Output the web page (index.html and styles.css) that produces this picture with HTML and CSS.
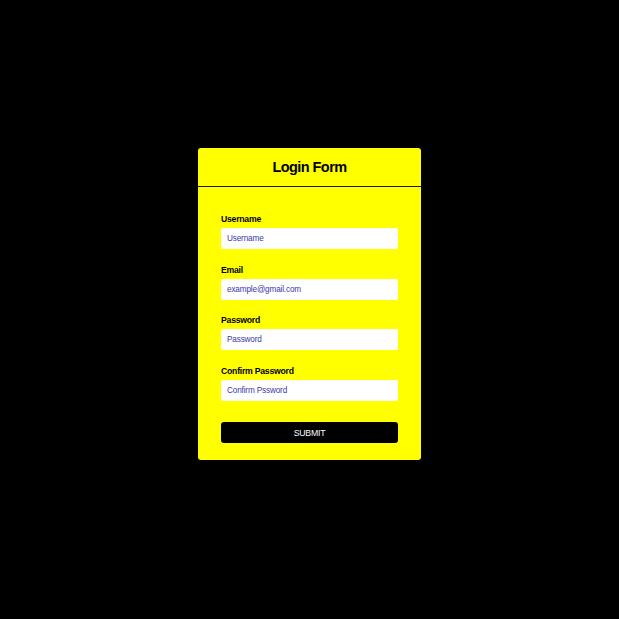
FILE: index.html
```html
<!DOCTYPE html>
<html>
<head>
<meta charset="utf-8">
<link rel="stylesheet" href="styles.css">
</head>
<body>
<div class="card">
  <div class="card-head">Login Form</div>
  <form class="card-body">
    <div class="field">
      <label class="label">Username</label>
      <input class="input" type="text" placeholder="Username">
    </div>
    <div class="field">
      <label class="label">Email</label>
      <input class="input" type="text" placeholder="example@gmail.com">
    </div>
    <div class="field">
      <label class="label">Password</label>
      <input class="input" type="password" placeholder="Password">
    </div>
    <div class="field">
      <label class="label">Confirm Password</label>
      <input class="input" type="password" placeholder="Confirm Pssword">
    </div>
    <button class="submit" type="button">SUBMIT</button>
  </form>
</div>
</body>
</html>
```

FILE: styles.css
```css
html, body {
  margin: 0;
  padding: 0;
  background: #000;
  height: 100%;
}
body {
  font-family: "Liberation Sans", Arial, sans-serif;
}
.card {
  width: 223px;
  margin: 148px auto 0;
  background: #ffff00;
  border-radius: 3px;
  overflow: hidden;
}
.card-head {
  height: 38px;
  line-height: 38px;
  text-align: center;
  font-weight: bold;
  font-size: 14.5px;
  letter-spacing: -0.55px;
  color: #000;
  border-bottom: 1px solid #1a1a1a;
}
.card-body {
  margin: 0;
  padding: 27px 23px 17px;
  display: flex;
  flex-direction: column;
}
.field {
  display: flex;
  flex-direction: column;
  margin-bottom: 15.5px;
}
.label {
  font-size: 8.7px;
  letter-spacing: -0.25px;
  font-weight: bold;
  line-height: 11px;
  height: 11px;
  margin-bottom: 3px;
  color: #000;
}
.input {
  box-sizing: border-box;
  width: 177px;
  height: 21px;
  margin: 0;
  border: none;
  border-radius: 2px;
  background: #fff;
  padding: 0 6px;
  font-family: "Liberation Sans", Arial, sans-serif;
  font-size: 8.2px;
  letter-spacing: -0.15px;
  outline: none;
}
.input::placeholder {
  color: #3a3aa8;
  opacity: 1;
}
.submit {
  margin-top: 6px;
  width: 177px;
  height: 21px;
  border: none;
  border-radius: 3px;
  background: #000;
  color: #fff;
  font-family: "Liberation Sans", Arial, sans-serif;
  font-size: 8.7px;
  letter-spacing: -0.2px;
  padding: 0;
  cursor: pointer;
}
```
